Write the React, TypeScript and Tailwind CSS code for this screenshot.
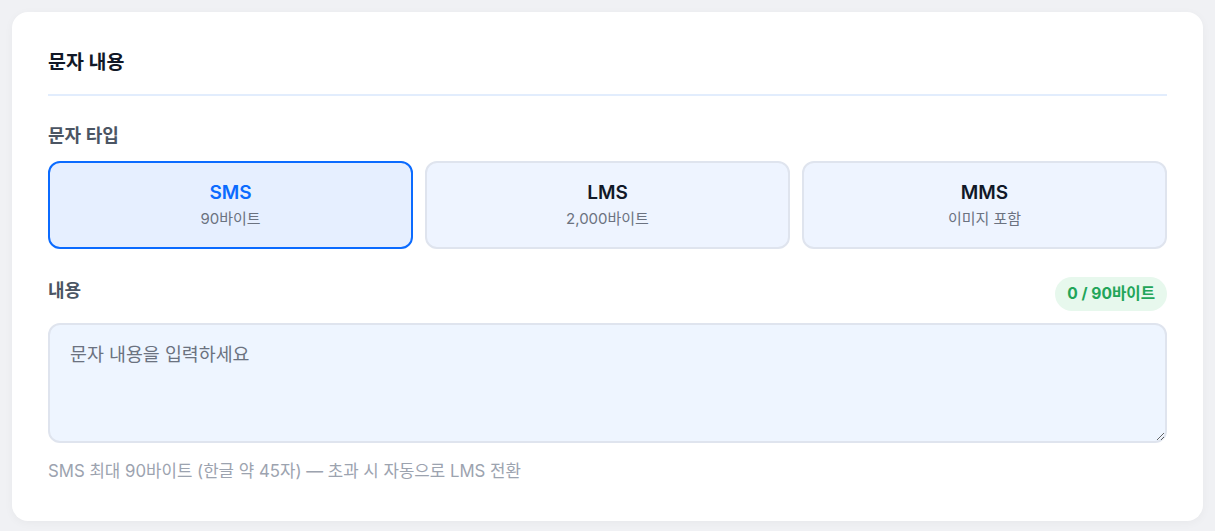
import React from "react";

const font = { fontFamily: '"Inter", "Noto Sans CJK KR", sans-serif' };

function TypeCard({ title, sub, active }: { title: string; sub: string; active?: boolean }) {
  return (
    <button
      className={
        "flex h-[88px] flex-col items-center justify-center rounded-[12px] border-2 " +
        (active ? "border-[#0b6bff] bg-[#e6efff]" : "border-[#dfe4ee] bg-[#eef4ff]")
      }
      style={font}
    >
      <span className={"text-[19px] font-semibold leading-[28px] " + (active ? "text-[#0b6bff]" : "text-[#111827]")}>
        {title}
      </span>
      <span className="text-[15px] leading-[24px] text-[#6b7280]">{sub}</span>
    </button>
  );
}

export default function App() {
  return (
    <div className="min-h-[531px] bg-[#f0f1f4] px-[12px] pt-[12px]" style={font}>
      <div className="rounded-[16px] bg-white px-[36px] pb-[38px] pt-[36px] shadow-[0_2px_10px_rgba(0,0,0,0.04)]">
        <div className="border-b-2 border-[#e2edfd] pb-[18px]">
          <h2 className="text-[19.5px] font-bold leading-[28px] text-[#111827]">문자 내용</h2>
        </div>
        <div className="mt-[27px] text-[18px] font-semibold leading-[26px] text-[#4b5563]">문자 타입</div>
        <div className="mt-[12px] grid grid-cols-3 gap-[12px]">
          <TypeCard title="SMS" sub="90바이트" active />
          <TypeCard title="LMS" sub="2,000바이트" />
          <TypeCard title="MMS" sub="이미지 포함" />
        </div>
        <div className="mt-[28px] flex items-start justify-between">
          <span className="text-[18px] font-semibold leading-[27px] text-[#4b5563]">내용</span>
          <span className="rounded-full bg-[#e7f8ed] px-[12px] py-[5px] text-[15.6px] font-bold leading-[24px] text-[#22a559]">
            0 / 90바이트
          </span>
        </div>
        <textarea
          className="mt-[12px] block h-[120px] w-full resize-y rounded-[12px] border-2 border-[#dfe4ee] bg-[#eef5ff] px-[20px] py-[16px] text-[18.4px] leading-[27px] text-[#111827] outline-none placeholder:text-[#6b7280]"
          placeholder="문자 내용을 입력하세요"
          style={font}
        />
        <p className="mt-[16px] text-[16.8px] leading-[24px] text-[#9ca3af]">
          SMS 최대 90바이트 (한글 약 45자) — 초과 시 자동으로 LMS 전환
        </p>
      </div>
    </div>
  );
}
